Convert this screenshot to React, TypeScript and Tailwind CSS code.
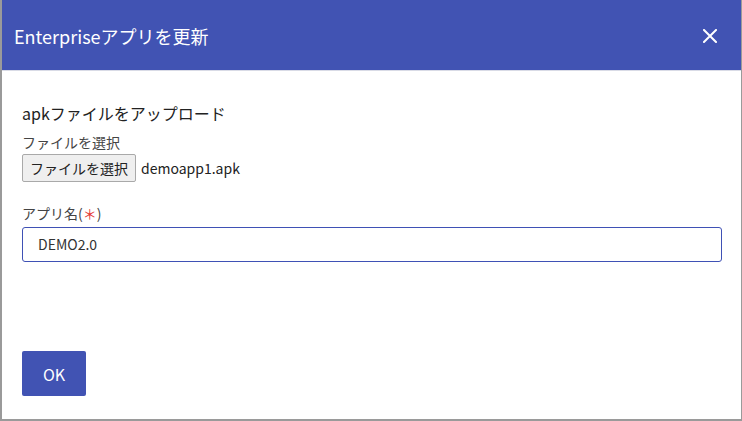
import React from "react";

export default function App() {
  const font = { fontFamily: '"Noto Sans CJK JP", "Noto Sans", sans-serif' };
  return (
    <div
      className="w-[742px] h-[421px] bg-white border-l-2 border-r border-b-2 border-[#9a9a9a] flex flex-col"
      style={font}
    >
      <div className="h-[71px] bg-[#4153b3] border-b border-[#d9dbe6] flex items-center justify-between pl-[12px] pr-[24px] shrink-0">
        <div className="text-white text-[18px] leading-none pt-[1px]">Enterpriseアプリを更新</div>
        <svg width="14" height="14" viewBox="0 0 14 14" className="mt-[1px]">
          <path d="M1 1L13 13M13 1L1 13" stroke="white" strokeWidth="2" strokeLinecap="square" />
        </svg>
      </div>
      <div className="flex-1 flex flex-col pl-[20px] pr-[19px]">
        <div className="mt-[30px] text-[16px] leading-[24px] text-[#222]">apkファイルをアップロード</div>
        <div className="mt-[7px] text-[14px] leading-[20px] text-[#444]">ファイルを選択</div>
        <div className="mt-[2px] flex items-center">
          <div className="h-[28px] px-[7px] bg-[#efefef] border border-[#a9a9a9] rounded-[2px] flex items-center text-[14px] text-[#222]">
            ファイルを選択
          </div>
          <div className="ml-[5px] text-[14px] text-[#222]">demoapp1.apk</div>
        </div>
        <div className="mt-[21px] text-[14px] leading-[20px] text-[#444]">
          アプリ名(<span className="text-[#e53935]">＊</span>)
        </div>
        <div className="mt-[4px] h-[35px] border border-[#3f51b5] rounded-[3px] flex items-center pl-[15px] text-[14px] text-[#333]">
          DEMO2.0
        </div>
        <div className="mt-[89px]">
          <div className="w-[64px] h-[45px] bg-[#4153b3] rounded-[2px] flex items-center justify-center text-white text-[16px]">
            OK
          </div>
        </div>
      </div>
    </div>
  );
}
